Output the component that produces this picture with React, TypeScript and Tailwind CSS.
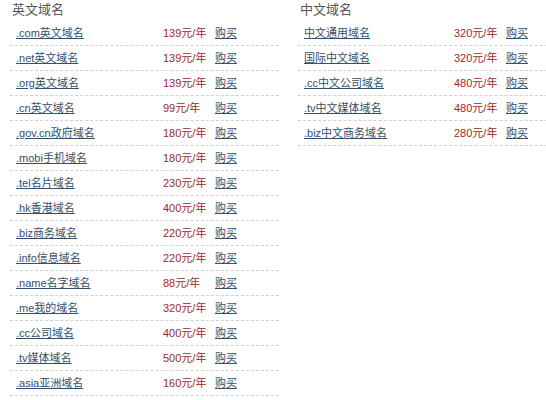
import React from "react";

type Item = { name: string; price: string };

const en: Item[] = [
  { name: ".com英文域名", price: "139元/年" },
  { name: ".net英文域名", price: "139元/年" },
  { name: ".org英文域名", price: "139元/年" },
  { name: ".cn英文域名", price: "99元/年" },
  { name: ".gov.cn政府域名", price: "180元/年" },
  { name: ".mobi手机域名", price: "180元/年" },
  { name: ".tel名片域名", price: "230元/年" },
  { name: ".hk香港域名", price: "400元/年" },
  { name: ".biz商务域名", price: "220元/年" },
  { name: ".info信息域名", price: "220元/年" },
  { name: ".name名字域名", price: "88元/年" },
  { name: ".me我的域名", price: "320元/年" },
  { name: ".cc公司域名", price: "400元/年" },
  { name: ".tv媒体域名", price: "500元/年" },
  { name: ".asia亚洲域名", price: "160元/年" },
];

const cn: Item[] = [
  { name: "中文通用域名", price: "320元/年" },
  { name: "国际中文域名", price: "320元/年" },
  { name: ".cc中文公司域名", price: "480元/年" },
  { name: ".tv中文媒体域名", price: "480元/年" },
  { name: ".biz中文商务域名", price: "280元/年" },
];

const font = { fontFamily: '"Liberation Sans", "Noto Sans CJK SC", sans-serif' };

const Column: React.FC<{ title: string; items: Item[]; cls: string; nameW: string }> = ({
  title,
  items,
  cls,
  nameW,
}) => (
  <div className={cls}>
    <h3 className="h-[21px] pl-[2px] pt-[1px] text-[13px] leading-[17px] text-[#555]">{title}</h3>
    <ul>
      {items.map((it) => (
        <li
          key={it.name}
          className="flex h-[25px] items-center border-b border-dashed border-[#d0d0d0] pl-[6px] text-[11px] leading-[15px]"
        >
          <a href="#" className={`${nameW} shrink-0 text-[#34506a] underline`}>
            {it.name}
          </a>
          <span className="w-[52px] shrink-0 text-[#9a2a2a]">{it.price}</span>
          <a href="#" className="text-[#34506a] underline">
            购买
          </a>
        </li>
      ))}
    </ul>
  </div>
);

export default function App() {
  return (
    <div className="flex h-[400px] w-[546px] overflow-hidden bg-white" style={font}>
      <Column title="英文域名" items={en} cls="ml-[10px] w-[269px] shrink-0" nameW="w-[147px]" />
      <Column title="中文域名" items={cn} cls="ml-[19px] w-[260px] shrink-0" nameW="w-[150px]" />
    </div>
  );
}
